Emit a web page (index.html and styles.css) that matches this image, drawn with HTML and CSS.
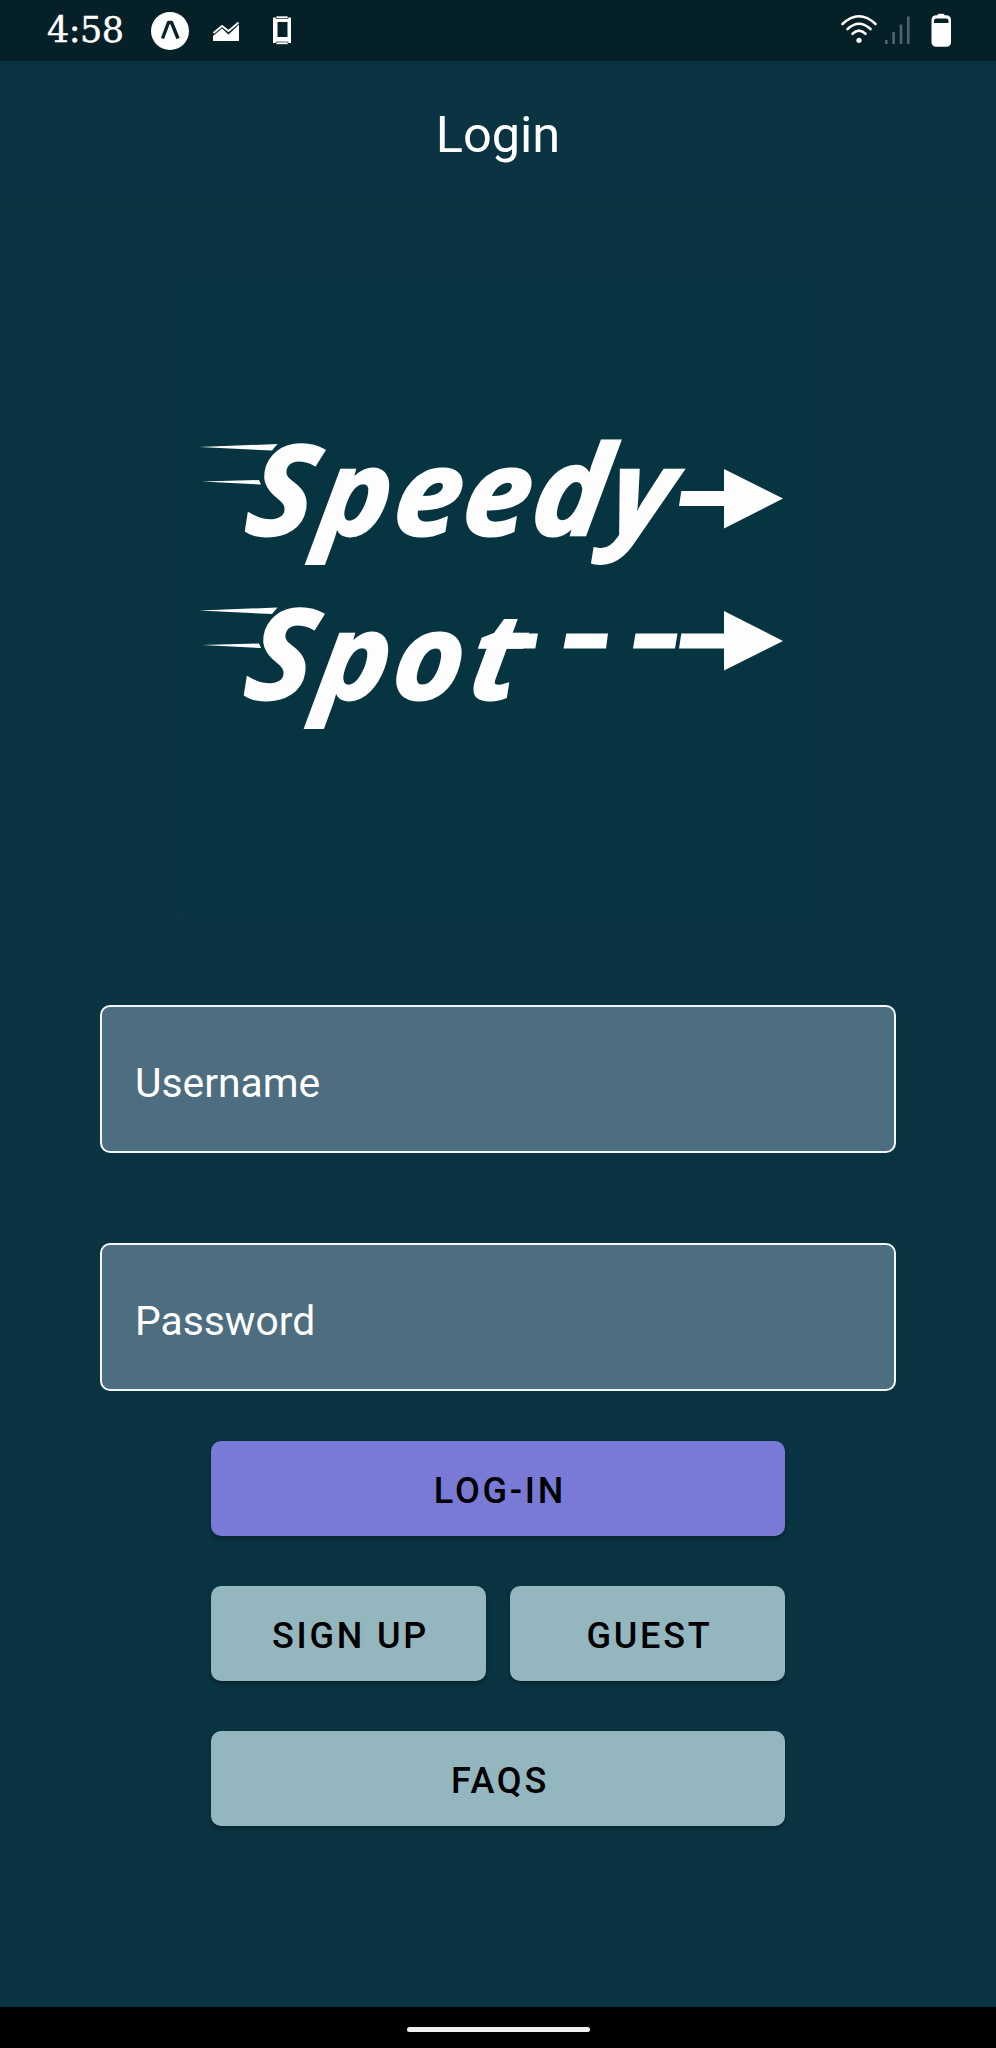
FILE: index.html
```html
<!DOCTYPE html>
<html lang="en">
<head>
<meta charset="utf-8">
<title>Login</title>
<link rel="stylesheet" href="styles.css">
</head>
<body>
<div class="screen">
  <div class="status">
    <span class="time">4:58</span>
    <svg class="status-left" width="150" height="61" viewBox="145 0 150 61">
      <circle cx="170" cy="31" r="19" fill="#fff"/>
      <path d="M162.500 38.500 L168.500 22.500 H171.500 L178 38.500" fill="none" stroke="#08222a" stroke-width="3.400" stroke-linejoin="round"/>
      <path d="M213 41 V36 L222 28.500 L228.500 34.500 L239 24.500 V41 Z" fill="#fff"/>
      <path d="M213.500 33 L222 26 L228.500 31 L238.500 22.500" fill="none" stroke="#fff" stroke-width="1.800"/>
      <path d="M273 17.500 H291 V43 H273 Z M277.500 22 V37 H287.500 V22 Z" fill="#fff" fill-rule="evenodd"/>
      <path d="M276 16 H288 V18.500 H276 Z M276 42 H288 V44.500 H276 Z" fill="#fff" stroke="#08222a" stroke-width=".7"/>
    </svg>
    <svg class="status-right" width="120" height="61" viewBox="834 0 120 61">
      <g fill="none" stroke="#fff" stroke-width="2.600" stroke-linecap="round">
        <path d="M841.500 24 Q858 8.500 874.500 24"/>
        <path d="M846.500 29 Q858 18.500 869.500 29"/>
        <path d="M851.500 33.800 Q858 27.500 864.500 33.800"/>
      </g>
      <circle cx="858" cy="40.300" r="2.600" fill="#fff"/>
      <path d="M885.300 44V40 M892.600 44V32 M900 44V24.500 M907.300 44V16.500" fill="none" stroke="#52646a" stroke-width="2.600"/>
      <rect x="930.500" y="15.200" width="19.500" height="31.500" rx="4.500" fill="#fff"/>
      <rect x="936.500" y="13.800" width="7" height="4" rx="1.500" fill="#fff"/>
      <path d="M933 23 V21 Q933 18.500 935.500 18.500 H945 Q947.500 18.500 947.500 21 V23 Z" fill="#08222a"/>
    </svg>
  </div>
  <header class="header">Login</header>
  <main class="content">
    <svg class="logo" width="635" height="634" viewBox="182 280 635 634">
      <g fill="#fdfdfd">
        <g class="logo-text">
          <text transform="translate(244 535) skewX(-9)" x="0 72 147 216 285 362"><tspan class="initial">S</tspan>pee<tspan class="tall">d</tspan>y</text>
          <text transform="translate(243 698.500) skewX(-9)" x="0 72 147 224"><tspan class="initial">S</tspan>pot</text>
        </g>
        <path d="M200 447 L278.500 444 L273 450.500 Z M203 481.500 L260 480 L262 484.500 Z"/>
        <path d="M200 610.500 L278.500 607.500 L273 614 Z M203 645 L260 643.500 L262 648 Z"/>
        <path d="M682.300 491 H725 V469 L784 498.500 L725 528.500 V506 H680 Z"/>
        <path d="M682.300 633.500 H725 V611 L784 641 L725 670.500 V648.500 H680 Z"/>
        <path d="M505 633.500 H539 L536.300 648.500 H505 Z M567.300 633.500 H609 L607 648.500 H564.500 Z M636.500 633.500 H678.500 L676 648.500 H634 Z"/>
      </g>
    </svg>
    <form class="form">
      <label class="field">Username</label>
      <label class="field">Password</label>
    </form>
    <div class="actions">
      <button class="btn primary wide">LOG-IN</button>
      <button class="btn">SIGN UP</button>
      <button class="btn">GUEST</button>
      <button class="btn wide">FAQS</button>
    </div>
  </main>
  <footer class="nav"><span class="pill"></span></footer>
</div>
</body>
</html>
```
FILE: styles.css
```css
* { box-sizing: border-box; }
body { margin: 0; background: #0a3441; font-family: Roboto, sans-serif; }
.screen { width: 996px; height: 2048px; display: flex; flex-direction: column; }
.status { height: 61px; flex: none; display: flex; background: #062027; color: #fff; padding: 0 41px 0 47px; }
.time { width: 98px; font: 35px/61px "DejaVu Serif", serif; letter-spacing: -.5px; -webkit-text-stroke: .4px #fff; }
.status-right { margin-left: auto; }
.header { height: 142px; flex: none; border-bottom: 1px solid #0a303b; color: #fff; text-align: center; font-size: 50.5px; line-height: 147px; }
.content { flex: 1; display: flex; flex-direction: column; align-items: center; padding-top: 77px; }
.logo { flex: none; background: #063541; }
.logo-text { font: italic 700 119px "Open Sans", sans-serif; stroke: #fdfdfd; stroke-width: 2.6px; }
.initial { font-size: 125px; }
.tall { font-size: 124px; }
.form { width: 796px; margin-top: 91px; display: flex; flex-direction: column; gap: 90px; }
.field { height: 148px; padding: 4px 33px 0; border: 2.5px solid #f4f7f8; border-radius: 10px; background: #4d6d80; color: #fff; font-size: 40.8px; line-height: 144px; }
.actions { width: 574px; margin-top: 50px; display: grid; grid-template-columns: 1fr 1fr; gap: 50px 24px; }
.btn { height: 95px; border: 0; border-radius: 10px; padding: 4px 0 0 4px; background: #94b7bf; color: #000; font: 500 36px Roboto, sans-serif; letter-spacing: 2.8px; box-shadow: 0 3px 5px rgba(0,0,0,.28); }
.primary { background: #787ad5; }
.wide { grid-column: span 2; }
.nav { height: 41px; flex: none; background: #000; display: flex; justify-content: center; padding-top: 20px; }
.pill { width: 183px; height: 5px; border-radius: 3px; background: #f0f0f0; }
```
